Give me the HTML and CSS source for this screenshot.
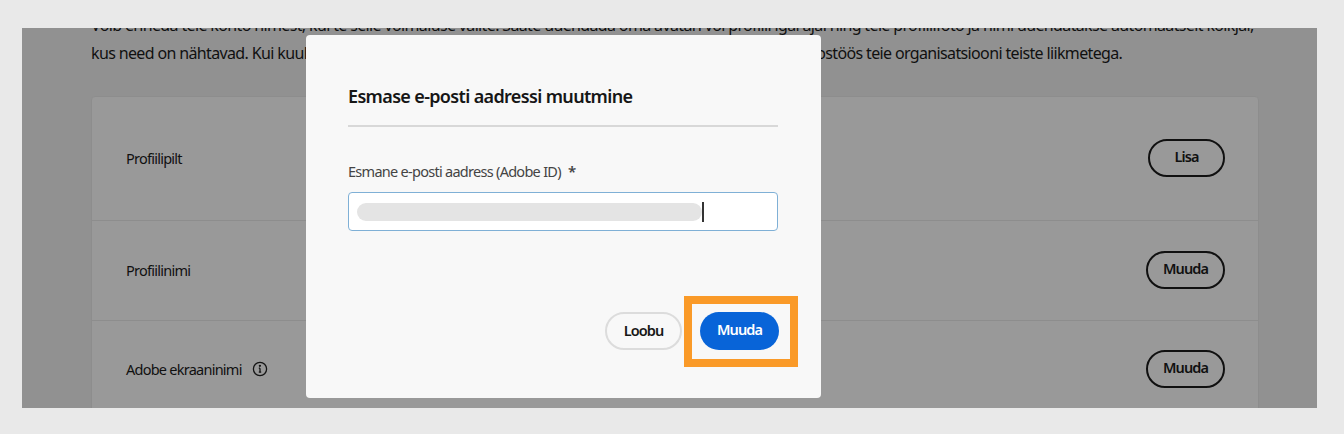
FILE: index.html
```html
<!DOCTYPE html>
<html lang="et">
<head>
    <meta charset="UTF-8">
    <meta name="viewport" content="width=device-width, initial-scale=1.0">
    <title>Esmase e-posti aadressi muutmine</title>
    <link rel="stylesheet" href="styles.css">
</head>
<body>

    <div class="frame">

        <!-- Leht modaalakna taga -->
        <main class="page">
            <p class="intro">Võib erineda teie konto nimest, kui te selle võimaluse valite. Saate uuendada oma avatari või profiili igal ajal ning teie profiilifoto ja nimi uuendatakse automaatselt kõikjal,<br>kus need on nähtavad. Kui kuulute ettevõttesse või ka meeskonda, kuvatakse teie profiilifoto ja nimi ka koostöös teie organisatsiooni teiste liikmetega.</p>

            <section class="card">
                <div class="row row-first">
                    <span class="row-label">Profiilipilt</span>
                    <button class="btn-outline btn-small">Lisa</button>
                </div>
                <div class="row">
                    <span class="row-label">Profiilinimi</span>
                    <button class="btn-outline">Muuda</button>
                </div>
                <div class="row row-last">
                    <span class="row-label">Adobe ekraaninimi
                        <svg class="info-icon" viewBox="0 0 16 16" width="16" height="16" fill="none" stroke="#222" stroke-width="1.3">
                            <circle cx="8" cy="8" r="6.6"></circle>
                            <path d="M8 7.2v4M6.8 11.2h2.4M6.8 7.2H8"></path>
                            <circle cx="7.9" cy="4.8" r="0.5" fill="#222"></circle>
                        </svg>
                    </span>
                    <button class="btn-outline">Muuda</button>
                </div>
            </section>
        </main>

        <div class="overlay"></div>

        <!-- Modaalaken -->
        <div class="modal">
            <h2 class="modal-title">Esmase e-posti aadressi muutmine</h2>
            <label class="field-label">Esmane e-posti aadress (Adobe ID) <span class="star">*</span></label>
            <div class="field">
                <span class="blur-text"></span>
                <span class="caret"></span>
            </div>
            <div class="modal-actions">
                <button class="btn-cancel">Loobu</button>
                <div class="highlight">
                    <button class="btn-primary">Muuda</button>
                </div>
            </div>
        </div>

    </div>

</body>
</html>
```

FILE: styles.css
```css
* {
    margin: 0;
    padding: 0;
    box-sizing: border-box;
    font-family: "Noto Sans", Arial, sans-serif;
}

html,
body {
    height: 100%;
    overflow: hidden;
}

body {
    background-color: #e9e9e9;
    padding: 28px 27px 26px 22px;
}

/* Kaader */
.frame {
    position: relative;
    height: 380px;
    overflow: hidden;
    background-color: #f2f2f2;
}

/* Leht */
.page {
    padding: 0 58px 0 69px;
    margin-top: -17px;
}

.intro {
    font-size: 16px;
    line-height: 28px;
    letter-spacing: -0.64px;
    color: #1c1c1c;
    white-space: nowrap;
    margin-bottom: 29px;
}

.card {
    border: 1px solid #ececec;
    border-radius: 4px;
    background-color: #fff;
}

.row {
    display: flex;
    justify-content: space-between;
    align-items: center;
    height: 100px;
    padding: 0 33px 0 34px;
    border-bottom: 1px solid #ececec;
}

.row-first {
    height: 124px;
}

.row-last {
    height: 98px;
}

.row-label {
    display: flex;
    align-items: center;
    gap: 10px;
    padding-bottom: 2px;
    font-size: 14.5px;
    letter-spacing: -0.75px;
    color: #1c1c1c;
}

.info-icon {
    display: block;
}

.btn-outline {
    width: 79px;
    height: 38px;
    margin-bottom: 2px;
    padding-bottom: 3px;
    background: transparent;
    border: 2px solid #1c1c1c;
    border-radius: 19px;
    font-size: 14.5px;
    font-weight: 600;
    letter-spacing: -0.9px;
    color: #1c1c1c;
}

.btn-small {
    width: 77px;
}

.overlay {
    position: absolute;
    inset: 0;
    background-color: rgba(0, 0, 0, 0.4);
}

/* Modaalaken */
.modal {
    position: absolute;
    top: 7px;
    left: 284px;
    width: 515px;
    height: 363px;
    padding: 48px 43px 0 42px;
    background-color: #f8f8f8;
    border-radius: 4px;
}

.modal-title {
    font-size: 18px;
    font-weight: 600;
    line-height: 26px;
    letter-spacing: -0.65px;
    color: #161616;
    padding-bottom: 16px;
    border-bottom: 2px solid #d8d8d8;
    margin-bottom: 34px;
}

.field-label {
    display: block;
    font-size: 14.5px;
    line-height: 20px;
    letter-spacing: -0.72px;
    color: #444;
    margin-bottom: 11px;
}

.star {
    font-size: 15px;
    font-weight: 600;
    margin-left: 4px;
}

.field {
    display: flex;
    align-items: center;
    height: 39px;
    padding-left: 8px;
    background-color: #fff;
    border: 1px solid #7fb0d6;
    border-radius: 4px;
}

.blur-text {
    width: 345px;
    height: 18px;
    background-color: #e4e4e4;
    border-radius: 9px;
    filter: blur(0.6px);
}

.caret {
    width: 1.5px;
    height: 20px;
    background-color: #333;
}

.modal-actions {
    display: flex;
    justify-content: flex-end;
    align-items: center;
    margin-top: 65px;
    margin-right: -20px;
}

.btn-cancel {
    width: 77px;
    height: 38px;
    margin-right: 2px;
    margin-bottom: 2px;
    padding-bottom: 2px;
    background: transparent;
    border: 2px solid #dcdcdc;
    border-radius: 19px;
    font-size: 14.5px;
    font-weight: 600;
    letter-spacing: -0.9px;
    color: #161616;
}

.highlight {
    display: flex;
    align-items: center;
    width: 114px;
    height: 71px;
    padding-left: 8px;
    border: 8px solid #fa9a28;
}

.btn-primary {
    width: 79px;
    height: 38px;
    margin-bottom: 2px;
    padding-bottom: 3px;
    background-color: #0864d8;
    border: none;
    border-radius: 19px;
    font-size: 14.5px;
    font-weight: 600;
    letter-spacing: -0.9px;
    color: #fff;
}
```
